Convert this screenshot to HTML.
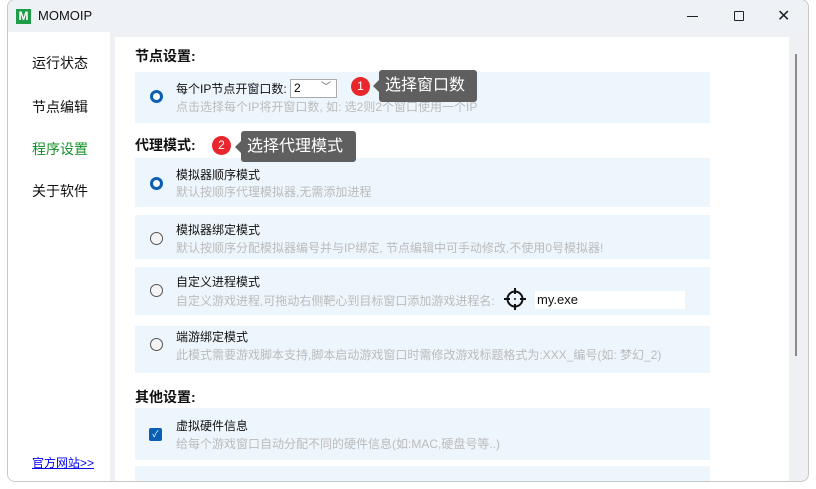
<!DOCTYPE html>
<html><head><meta charset="utf-8"><style>
*{margin:0;padding:0;box-sizing:border-box}
body{width:816px;height:489px;background:#fff;font-family:"Liberation Sans","Noto Sans CJK SC",sans-serif;position:relative;overflow:hidden}
.win{position:absolute;left:7px;top:-1px;width:802px;height:483px;border:1px solid #c8c8c8;border-radius:8px;background:#eef0f3;overflow:hidden}
.title{position:absolute;left:0;top:0;width:100%;height:32px;background:#eef2f7}
.logo{position:absolute;left:8px;top:9px;width:15px;height:15px;background:#1e9c48;color:#fff;font-weight:bold;font-size:12px;line-height:15px;text-align:center}
.tt{position:absolute;left:30px;top:8px;font-size:13px;color:#111}
.side{position:absolute;left:0;top:32px;width:102px;height:451px;background:#fff}
.side div{position:absolute;left:24px;font-size:14px;color:#111}
.panel{position:absolute;left:107px;top:37px;width:674px;height:446px;background:#fff}
.h{position:absolute;font-size:14px;font-weight:bold;color:#111}
.card{position:absolute;left:127px;width:575px;background:#eef6fd}
.t1{position:absolute;left:41px;font-size:12px;color:#111}
.t2{position:absolute;left:41px;font-size:12px;color:#bbb}
.r{position:absolute;left:15px;width:13px;height:13px;border-radius:50%;border:1px solid #555;background:#f4f4f4}
.r.on{border:3.5px solid #0a5fb4;background:#fff}
.badge{position:absolute;width:19px;height:19px;border-radius:50%;background:#e8262c;color:#fff;font-size:12px;text-align:center;line-height:19px}
.tip{position:absolute;background:#5f5f5f;color:#fff;font-size:16px;line-height:31px;padding-left:6px;border-radius:3px}
.tip:before{content:"";position:absolute;left:-6px;top:10px;border:6px solid transparent;border-left:0;border-right-color:#5f5f5f}
</style></head><body>
<div class="win">
<div class="title"><div class="logo">M</div><div class="tt">MOMOIP</div>
<div style="position:absolute;left:679px;top:16px;width:11px;height:1px;background:#222"></div>
<div style="position:absolute;left:726px;top:11px;width:10px;height:10px;border:1px solid #222;border-radius:1px"></div>
<div style="position:absolute;left:769px;top:6px;font-size:16px;color:#222">✕</div>
</div>
<div class="side">
<div style="top:21px">运行状态</div>
<div style="top:65px">节点编辑</div>
<div style="top:107px;color:#15902a">程序设置</div>
<div style="top:149px">关于软件</div>
<div style="top:422px;left:24px;font-size:12px;color:#00e;text-decoration:underline">官方网站&gt;&gt;</div>
</div>
<div class="panel"></div>
<div style="position:absolute;left:787px;top:54px;width:2px;height:302px;background:#8a8a8a"></div>

<div class="h" style="left:127px;top:46px">节点设置:</div>
<div class="card" style="top:72px;height:51px">
<div class="r on" style="top:18px"></div>
<div class="t1" style="top:8px">每个IP节点开窗口数:</div>
<div style="position:absolute;left:155px;top:7px;width:47px;height:19px;background:#fff;border:1px solid #aaa;font-size:12px;padding-left:3px;line-height:17px">2<span style="position:absolute;right:5px;top:-1px;color:#555;font-size:10px">﹀</span></div>
<div class="t2" style="top:26px">点击选择每个IP将开窗口数, 如: 选2则2个窗口使用一个IP</div>
</div>

<div class="h" style="left:127px;top:135px">代理模式:</div>
<div class="card" style="top:158px;height:49px">
<div class="r on" style="top:19px"></div>
<div class="t1" style="top:8px">模拟器顺序模式</div>
<div class="t2" style="top:25px">默认按顺序代理模拟器,无需添加进程</div>
</div>
<div class="card" style="top:215px;height:44px">
<div class="r" style="top:17px"></div>
<div class="t1" style="top:6px">模拟器绑定模式</div>
<div class="t2" style="top:24px">默认按顺序分配模拟器编号并与IP绑定, 节点编辑中可手动修改,不使用0号模拟器!</div>
</div>
<div class="card" style="top:267px;height:48px">
<div class="r" style="top:17px"></div>
<div class="t1" style="top:6px">自定义进程模式</div>
<div class="t2" style="top:25px">自定义游戏进程,可拖动右侧靶心到目标窗口添加游戏进程名:</div>
<svg style="position:absolute;left:368px;top:20px" width="24" height="24" viewBox="0 0 24 24" fill="none" stroke="#111" stroke-width="2"><circle cx="12" cy="12" r="7.5"/><path d="M12 1v6M12 17v6M1 12h6M17 12h6"/><circle cx="12" cy="12" r="1" fill="#111" stroke="none"/></svg>
<div style="position:absolute;left:400px;top:24px;width:150px;height:18px;background:#fff;font-size:13px;color:#111;padding-left:2px;line-height:18px">my.exe</div>
</div>
<div class="card" style="top:326px;height:47px">
<div class="r" style="top:12px"></div>
<div class="t1" style="top:2px">端游绑定模式</div>
<div class="t2" style="top:20px">此模式需要游戏脚本支持,脚本启动游戏窗口时需修改游戏标题格式为:XXX_编号(如: 梦幻_2)</div>
</div>

<div class="h" style="left:127px;top:387px">其他设置:</div>
<div class="card" style="top:408px;height:52px">
<div style="position:absolute;left:14px;top:20px;width:13px;height:13px;border-radius:2px;background:#0a5fb4;color:#fff;font-size:9px;text-align:center;line-height:13px">✓</div>
<div class="t1" style="top:9px">虚拟硬件信息</div>
<div class="t2" style="top:27px">给每个游戏窗口自动分配不同的硬件信息(如:MAC,硬盘号等..)</div>
</div>
<div class="card" style="top:466px;height:20px"></div>

<div class="badge" style="left:343px;top:77px">1</div>
<div class="tip" style="left:371px;top:70px;width:98px;height:32px">选择窗口数</div>
<div class="badge" style="left:204px;top:136px">2</div>
<div class="tip" style="left:233px;top:131px;width:115px;height:31px">选择代理模式</div>
</div>
</body></html>
